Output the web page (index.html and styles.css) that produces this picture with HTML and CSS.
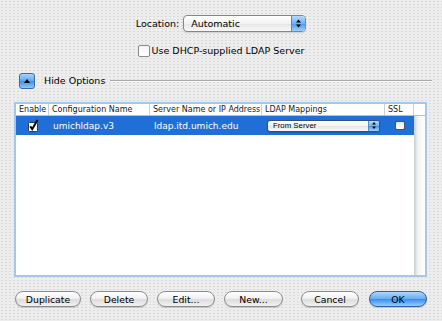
FILE: index.html
```html
<!DOCTYPE html>
<html>
<head>
<meta charset="utf-8">
<link rel="stylesheet" href="styles.css">
</head>
<body>
<div class="dialog">
  <div class="loc-row">
    <span class="label">Location:</span>
    <div class="popup loc-popup">
      <span class="popup-text">Automatic</span>
      <span class="popup-arrows"><svg width="13" height="15" viewBox="0 0 13 15"><path d="M4 6.5 L6.5 3.5 L9 6.5 Z M4 8.5 L9 8.5 L6.5 11.5 Z" fill="#000"/></svg></span>
    </div>
  </div>
  <div class="dhcp-row">
    <span class="checkbox"></span>
    <span class="dhcp-label">Use DHCP-supplied LDAP Server</span>
  </div>
  <div class="disc-row">
    <span class="disc-btn"><svg width="14" height="14" viewBox="0 0 14 14"><path d="M4 9 L7 5 L10 9 Z" fill="#000"/></svg></span>
    <span class="disc-label">Hide Options</span>
    <span class="sep"></span>
  </div>
  <div class="tbl">
    <div class="tmain">
      <div class="thead">
        <div class="th c-enable">Enable</div>
        <div class="th c-config">Configuration Name</div>
        <div class="th c-server">Server Name or IP Address</div>
        <div class="th c-ldap">LDAP Mappings</div>
        <div class="th c-ssl">SSL</div>
      </div>
      <div class="trow sel">
        <div class="td c-enable center">
          <svg width="12" height="13" viewBox="0 0 12 13"><rect x="1.5" y="3.5" width="9" height="9" rx="1" fill="#fff" stroke="#2a3a50"/><path d="M3.2 7.2 L5.2 10.2 L10.5 1" fill="none" stroke="#000" stroke-width="2"/></svg>
        </div>
        <div class="td c-config txt">umichldap.v3</div>
        <div class="td c-server txt">ldap.itd.umich.edu</div>
        <div class="td c-ldap">
          <div class="popup row-popup">
            <span class="popup-text">From Server</span>
            <span class="popup-arrows"><svg width="10" height="11" viewBox="0 0 10 11"><path d="M3 4.5 L5 2 L7 4.5 Z M3 6.5 L7 6.5 L5 9 Z" fill="#000"/></svg></span>
          </div>
        </div>
        <div class="td c-ssl center"><span class="mini-check"></span></div>
      </div>
      <div class="tfill"></div>
    </div>
    <div class="tscroll">
      <div class="corner"></div>
      <div class="track"></div>
    </div>
  </div>
  <div class="btn-row">
    <div class="btn w-dup">Duplicate</div>
    <div class="btn w58">Delete</div>
    <div class="btn w58">Edit...</div>
    <div class="btn w59">New...</div>
    <div class="btn w58 cancel">Cancel</div>
    <div class="btn w58 ok">OK</div>
  </div>
</div>
</body>
</html>
```
FILE: styles.css
```css
html, body {
  margin: 0;
  padding: 0;
}
body {
  width: 442px;
  height: 321px;
  overflow: hidden;
  font-family: "DejaVu Sans", "Noto Sans", sans-serif;
  font-size: 9.5px;
  color: #000;
  background-color: #ededed;
  background-image: radial-gradient(circle, #dadada 0.6px, transparent 0.9px);
  background-size: 4px 3px;
}
.dialog {
  display: flex;
  flex-direction: column;
  height: 321px;
}
.loc-row {
  margin-top: 14px;
  height: 18px;
  display: flex;
  justify-content: center;
  align-items: center;
  gap: 4px;
}
.popup {
  box-sizing: border-box;
  display: flex;
  align-items: stretch;
  border: 1px solid #868686;
  border-radius: 4px;
  background: linear-gradient(#ffffff, #f2f2f2 50%, #e6e6e6 51%, #f7f7f7);
  overflow: hidden;
  box-shadow: 0 1px 1px rgba(0,0,0,0.12);
}
.loc-popup {
  width: 123px;
  height: 17px;
}
.popup-text {
  flex: 1;
  display: flex;
  align-items: center;
  padding-left: 7px;
  white-space: nowrap;
}
.popup-arrows {
  display: flex;
  align-items: center;
  justify-content: center;
  width: 13px;
  background: linear-gradient(#b6dafc, #6eb2f6 50%, #4b98ee 51%, #9fd0fb);
  border-left: 1px solid #5d88c0;
}
.dhcp-row {
  margin-top: 12px;
  height: 13px;
  display: flex;
  justify-content: center;
  align-items: center;
  gap: 2px;
}
.checkbox {
  box-sizing: border-box;
  width: 12px;
  height: 12px;
  border: 1px solid #8a8a8a;
  border-radius: 2px;
  background: linear-gradient(#f4f4f4, #ffffff);
}
.disc-row {
  margin-top: 15px;
  height: 17px;
  display: flex;
  align-items: center;
  padding-left: 19px;
  padding-right: 10px;
}
.disc-btn {
  box-sizing: border-box;
  width: 16px;
  height: 16px;
  border: 1px solid #3f6aa6;
  border-radius: 3px;
  background: linear-gradient(#a8d4fc, #5aa6f4 50%, #3d8ee9 51%, #8ccafb);
  display: flex;
  align-items: center;
  justify-content: center;
}
.disc-label {
  margin-left: 9px;
  white-space: nowrap;
}
.sep {
  flex: 1;
  margin-left: 5px;
  height: 0;
  border-top: 1px solid #a9a9a9;
  border-bottom: 1px solid #f8f8f8;
}
.tbl {
  margin-top: 13px;
  margin-left: 14px;
  width: 413px;
  height: 175px;
  box-sizing: border-box;
  border: 2px solid #a8c7e7;
  background: #fff;
  display: flex;
}
.tmain {
  width: 398px;
  display: flex;
  flex-direction: column;
}
.thead {
  display: flex;
  height: 11px;
  border-bottom: 1px solid #bdbdbd;
}
.th {
  box-sizing: border-box;
  border-right: 1px solid #cfcfcf;
  padding-left: 3px;
  font-size: 8px;
  line-height: 11px;
  white-space: nowrap;
  overflow: hidden;
  color: #1a1a1a;
}
.c-enable { width: 33px; flex: none; }
.c-config { width: 101px; flex: none; }
.c-server { width: 112px; flex: none; }
.c-ldap { width: 123px; flex: none; }
.c-ssl { width: 29px; flex: none; }
.trow {
  display: flex;
  height: 19px;
  align-items: center;
}
.sel {
  background: #1f6fd6;
  color: #fff;
}
.td {
  box-sizing: border-box;
  height: 19px;
  display: flex;
  align-items: center;
  white-space: nowrap;
  overflow: hidden;
}
.td.txt {
  padding-left: 4px;
  font-size: 9px;
}
.td.center {
  justify-content: center;
}
.c-ldap.td {
  padding-left: 5px;
}
.row-popup {
  width: 113px;
  height: 12px;
  border-color: #34507a;
  border-radius: 3px;
  color: #000;
}
.row-popup .popup-text {
  padding-left: 5px;
  font-family: "Liberation Sans", Arial, sans-serif;
  font-size: 7.8px;
}
.row-popup .popup-arrows {
  width: 10px;
}
.mini-check {
  box-sizing: border-box;
  width: 10px;
  height: 9px;
  margin-left: 1px;
  border: 1px solid #44546a;
  border-radius: 2px;
  background: linear-gradient(#e8e8e8, #ffffff);
}
.tfill {
  flex: 1;
}
.tscroll {
  width: 11px;
  display: flex;
  flex-direction: column;
}
.corner {
  height: 11px;
  border-bottom: 1px solid #bdbdbd;
}
.track {
  flex: 1;
  background: linear-gradient(to right, #c9cccc 0, #dfe2e2 2px, #f3f4f4 4px, #ffffff 100%);
}
.btn-row {
  margin-top: 14px;
  height: 16px;
  display: flex;
  padding: 0 15px;
  gap: 9px;
}
.btn {
  box-sizing: border-box;
  height: 16px;
  border: 1px solid #8c8c8c;
  border-radius: 8px;
  display: flex;
  align-items: center;
  justify-content: center;
  font-size: 9.3px;
  white-space: nowrap;
  background: linear-gradient(#ffffff, #f1f1f1 45%, #dcdcdc 55%, #f2f2f2);
  box-shadow: 0 1px 1px rgba(0,0,0,0.15);
}
.w-dup { width: 66px; }
.w58 { width: 58px; }
.w59 { width: 59px; }
.cancel { margin-left: auto; }
.ok {
  margin-left: 1px;
  border-color: #2f5f9f;
  background: linear-gradient(#b0d8fd, #62abf4 50%, #3c8de8 51%, #92cefb);
}
```
